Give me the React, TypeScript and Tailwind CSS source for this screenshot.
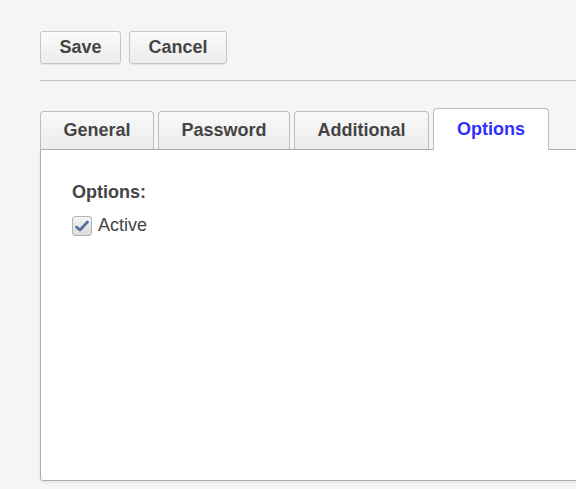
import React from "react";

const tabs = [
  { label: "General", width: "w-[114px]" },
  { label: "Password", width: "w-[132px]" },
  { label: "Additional", width: "w-[135px]" },
];

export default function App() {
  return (
    <div className="w-[576px] h-[489px] overflow-hidden bg-[#f5f5f5] text-[#444] font-['Liberation_Sans',Arial,sans-serif]">
      <div className="pl-[40px] pt-[31px]">
        <div className="flex gap-2">
          <button className="w-[81px] h-[33px] rounded-[3px] border border-[#c6c6c6] bg-gradient-to-b from-[#fbfbfb] to-[#ececec] shadow-[0_1px_1px_rgba(0,0,0,0.08)] text-[18px] font-bold text-[#444]">
            Save
          </button>
          <button className="w-[98px] h-[33px] rounded-[3px] border border-[#c6c6c6] bg-gradient-to-b from-[#fbfbfb] to-[#ececec] shadow-[0_1px_1px_rgba(0,0,0,0.08)] text-[18px] font-bold text-[#444]">
            Cancel
          </button>
        </div>

        <div className="mt-[16px] h-px bg-[#c4c4c4]" />

        <div className="mt-[27px] flex items-end gap-1 h-[41px]">
          {tabs.map((t) => (
            <div
              key={t.label}
              className={`${t.width} h-[38px] flex items-center justify-center rounded-t-[4px] border border-b-0 border-[#bdbdbd] bg-gradient-to-b from-[#f9f9f9] to-[#ececec] text-[18px] font-bold text-[#444]`}
            >
              {t.label}
            </div>
          ))}
          <div className="relative z-10 -mb-px w-[116px] h-[42px] flex items-center justify-center rounded-t-[4px] border border-b-0 border-[#bdbdbd] bg-white text-[18px] font-bold text-[#3030ff]">
            Options
          </div>
        </div>

        <div className="w-[600px] h-[332px] bg-white border border-[#ababab] rounded-bl-[3px] shadow-[0_1px_3px_rgba(0,0,0,0.08)] pl-[31px] pt-[32px]">
          <div className="text-[18px] font-bold leading-[21px]">Options:</div>
          <label className="mt-[12px] flex items-center gap-[6px] text-[18px] leading-[21px]">
            <span className="w-[20px] h-[20px] rounded-[3px] border border-[#b4b4b4] bg-gradient-to-b from-[#f4f4f4] to-[#dcdcdc] flex items-center justify-center">
              <svg width="14" height="12" viewBox="0 0 14 12">
                <path d="M1.5 7 L5 10 L12.5 2" fill="none" stroke="#4e6f9e" strokeWidth="2.6" strokeLinecap="round" strokeLinejoin="round" />
              </svg>
            </span>
            Active
          </label>
        </div>
      </div>
    </div>
  );
}
